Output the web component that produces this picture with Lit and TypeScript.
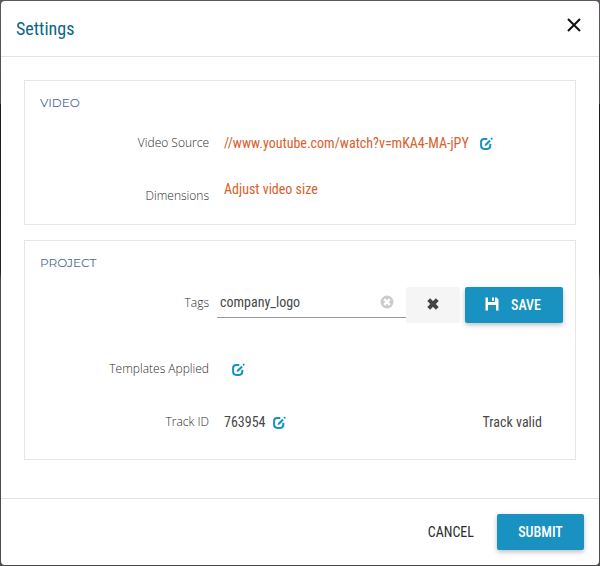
import { LitElement, html, css, svg } from "lit";
import { customElement, state } from "lit/decorators.js";

const editIcon = html`<svg class="edit-icon" viewBox="0 0 13 13" aria-hidden="true">
  ${svg`<path d="M7.3 1.9H4.2Q1.1 1.9 1.1 5V8.8Q1.1 11.9 4.2 11.9H7.2Q10.3 11.9 10.3 8.8V6.8" fill="none" stroke="currentColor" stroke-width="2"/>
  <path d="M4.6 8.9L5 7L9.3 2.7L10.8 4.2L6.5 8.5Z M10.4 1.7L11.6 .5L12.9 1.8L11.7 3Z" fill="currentColor"/>`}
</svg>`;

@customElement("app-root")
export class AppRoot extends LitElement {
  @state() private tags = "company_logo";

  static styles = css`
    :host {
      display: block;
      box-sizing: border-box;
      min-height: 100vh;
      padding: 1px;
      background: linear-gradient(#5c5a5c 0, #4c4c4c 104px, #1c1c1c 104px, #242424 272px, #4c4c4c 280px);
      font-family: "Roboto Condensed", "Liberation Sans Narrow", Roboto, sans-serif;
      font-size: 14px;
      line-height: 20px;
      font-weight: 450;
      color: #484848;
    }
    * { box-sizing: border-box; }
    .dialog {
      display: flex;
      flex-direction: column;
      min-height: calc(100vh - 2px);
      background: #fff;
      border-radius: 4px;
    }
    header {
      display: flex;
      align-items: center;
      justify-content: space-between;
      height: 56px;
      padding: 0 16px 0 15px;
      border-bottom: 1px solid #e3e3e3;
    }
    h1 { margin: 0; font-size: 18px; line-height: 24px; font-weight: 450; color: #0b6586; }
    button {
      border: 0;
      padding: 0;
      background: none;
      font: inherit;
      color: inherit;
      cursor: pointer;
    }
    svg { display: block; }
    .close { padding: 0 2px 8px; color: #111; }
    .close svg { width: 14px; height: 14px; }
    main {
      flex: 1;
      display: flex;
      flex-direction: column;
      gap: 15px;
      padding: 23px;
    }
    section { border: 1px solid #e6e6e6; padding: 12px 12px 8px 0; }
    .project { padding-bottom: 17px; }
    h2 {
      margin: 0 0 10px 15px;
      font: 400 12px/20px Montserrat, "Open Sans", sans-serif;
      color: #4a6797;
    }
    .row {
      display: grid;
      grid-template-columns: 184px minmax(0, 1fr);
      column-gap: 15px;
      min-height: 40px;
      align-items: center;
    }
    .row + .row { margin-top: 13px; }
    .label { font-family: "Open Sans", sans-serif; font-weight: 300; font-size: 12px; text-align: right; color: #2c2c2c; }
    .value { display: flex; align-items: center; gap: 8px; }
    .source { gap: 11px; }
    .top { align-self: start; padding-top: 3px; }
    a { color: #d9602b; text-decoration: none; }
    .edit { color: #1992c1; }
    .edit-icon { width: 13px; height: 13px; }
    .indent { padding-left: 8px; }
    .tags { column-gap: 8px; min-height: 36px; margin-top: 14px; align-items: start; }
    .tags .label { line-height: 31px; }
    .tags + .row { margin-top: 26px; }
    .field {
      flex: 1;
      min-width: 0;
      display: flex;
      align-items: center;
      height: 31px;
      padding: 0 12px 0 3px;
      border-bottom: 1px solid #999;
    }
    .field input {
      flex: 1;
      min-width: 0;
      border: 0;
      padding: 0;
      outline: 0;
      background: none;
      font: inherit;
      color: inherit;
    }
    .clear { color: #ccc; }
    .clear svg { width: 14px; height: 14px; }
    .editor { gap: 0; align-items: flex-start; }
    .discard, .primary { height: 36px; border-radius: 2px; }
    .discard {
      display: flex;
      align-items: center;
      justify-content: center;
      width: 54px;
      padding-bottom: 2px;
      background: #f5f5f5;
      color: #444;
    }
    .discard svg { width: 12px; height: 12px; }
    .primary {
      display: flex;
      align-items: center;
      gap: 12px;
      padding: 0 20px;
      background: #1992c1;
      color: #fff;
      font-weight: 500;
      box-shadow: 0 2px 5px rgba(0, 0, 0, 0.26);
    }
    .save { min-width: 98px; margin-left: 5px; }
    .submit { min-width: 87px; justify-content: center; }
    .save svg { width: 14px; height: 18px; }
    .status { margin-left: auto; padding-right: 21px; }
    footer {
      display: flex;
      align-items: center;
      justify-content: flex-end;
      gap: 23px;
      height: 67px;
      padding: 0 15px;
      border-top: 1px solid #e3e3e3;
    }
    .cancel { color: #2c2c2c; }
  `;

  render() {
    return html`<div class="dialog" role="dialog" aria-labelledby="title">
      <header>
        <h1 id="title">Settings</h1>
        <button class="close" aria-label="Close">
          <svg viewBox="0 0 14 14"><path d="M1 1L13 13M13 1L1 13" stroke="currentColor" stroke-width="2"/></svg>
        </button>
      </header>
      <main>
        <section>
          <h2>VIDEO</h2>
          <div class="row">
            <span class="label">Video Source</span>
            <div class="value source">
              <a href="//www.youtube.com/watch?v=mKA4-MA-jPY">//www.youtube.com/watch?v=mKA4-MA-jPY</a>
              <button class="edit" aria-label="Edit video source">${editIcon}</button>
            </div>
          </div>
          <div class="row">
            <span class="label">Dimensions</span>
            <div class="value top"><a href="#size">Adjust video size</a></div>
          </div>
        </section>
        <section class="project">
          <h2>PROJECT</h2>
          <div class="row tags">
            <label class="label" for="tags">Tags</label>
            <div class="value editor">
              <div class="field">
                <input id="tags" .value=${this.tags} @input=${(e: Event) => (this.tags = (e.target as HTMLInputElement).value)} />
                <button class="clear" aria-label="Clear tags" @click=${() => (this.tags = "")}>
                  <svg viewBox="0 0 14 14"><circle cx="7" cy="7" r="6.5" fill="currentColor"/><path d="M4.2 4.2L9.8 9.8M9.8 4.2L4.2 9.8" stroke="#fff" stroke-width="2.4"/></svg>
                </button>
              </div>
              <button class="discard" aria-label="Discard">
                <svg viewBox="0 0 12 12"><path d="M1.7 1.7L10.3 10.3M10.3 1.7L1.7 10.3" stroke="currentColor" stroke-width="4"/></svg>
              </button>
              <button class="primary save">
                <svg viewBox="0 0 14 18" aria-hidden="true"><path d="M.5 1.5H3V6H10V1.5H11.5L13.5 3.5V14.5H11V9H3V14.5H.5ZM7 1.5H9V4.8H7Z" fill="currentColor"/></svg>
                SAVE
              </button>
            </div>
          </div>
          <div class="row">
            <span class="label">Templates Applied</span>
            <div class="value indent"><button class="edit" aria-label="Edit templates">${editIcon}</button></div>
          </div>
          <div class="row">
            <span class="label">Track ID</span>
            <div class="value">
              <span>763954</span>
              <button class="edit" aria-label="Edit track ID">${editIcon}</button>
              <span class="status">Track valid</span>
            </div>
          </div>
        </section>
      </main>
      <footer>
        <button class="cancel">CANCEL</button>
        <button class="primary submit">SUBMIT</button>
      </footer>
    </div>`;
  }
}
